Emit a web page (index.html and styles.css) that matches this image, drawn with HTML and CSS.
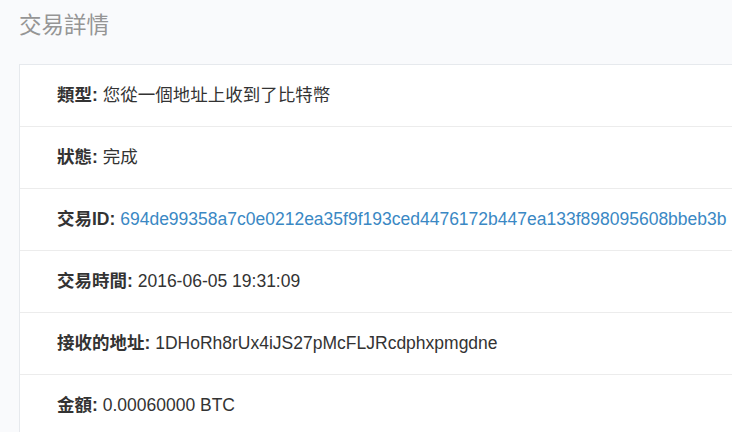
FILE: index.html
```html
<!DOCTYPE html>
<html lang="zh-Hant">
<head>
<meta charset="utf-8">
<title>交易詳情</title>
<link rel="stylesheet" href="styles.css">
</head>
<body>
<div class="page">
  <header class="page-header">
    <h1 class="page-title">交易詳情</h1>
  </header>
  <ul class="detail-list">
    <li class="detail-item"><span class="label">類型:</span> 您從一個地址上收到了比特幣</li>
    <li class="detail-item"><span class="label">狀態:</span> 完成</li>
    <li class="detail-item"><span class="label">交易ID:</span> <a class="txid" href="#">694de99358a7c0e0212ea35f9f193ced4476172b447ea133f898095608bbeb3b</a></li>
    <li class="detail-item"><span class="label">交易時間:</span> 2016-06-05 19:31:09</li>
    <li class="detail-item"><span class="label">接收的地址:</span> 1DHoRh8rUx4iJS27pMcFLJRcdphxpmgdne</li>
    <li class="detail-item detail-item-last"><span class="label">金額:</span> 0.00060000 BTC</li>
  </ul>
</div>
</body>
</html>
```
FILE: styles.css
```css
html, body {
  margin: 0;
  padding: 0;
  background: #f9fafc;
  overflow: hidden;
  height: 432px;
}
body {
  font-family: "Liberation Sans", "Noto Sans CJK TC", sans-serif;
  color: #333;
}
.page {
  width: 732px;
  height: 432px;
  overflow: hidden;
}
.page-header {
  height: 64px;
  padding-top: 10px;
  box-sizing: border-box;
}
.page-title {
  margin: 0 0 0 19px;
  font-size: 22.5px;
  line-height: 32px;
  font-weight: normal;
  color: #959595;
}
.detail-list {
  list-style: none;
  margin: 0 0 0 19px;
  padding: 0;
  width: 760px;
  background: #fff;
  border-top: 1px solid #e6e9ed;
  border-left: 1px solid #e6e9ed;
}
.detail-item {
  padding: 18px 0 18px 37px;
  line-height: 25px;
  font-size: 17.5px;
  border-bottom: 1px solid #ececec;
  white-space: nowrap;
}
.detail-item-last {
  padding-bottom: 15px;
  border-bottom: 0;
}
.label {
  font-weight: bold;
}
.txid {
  color: #3a88c4;
  text-decoration: none;
}
```
